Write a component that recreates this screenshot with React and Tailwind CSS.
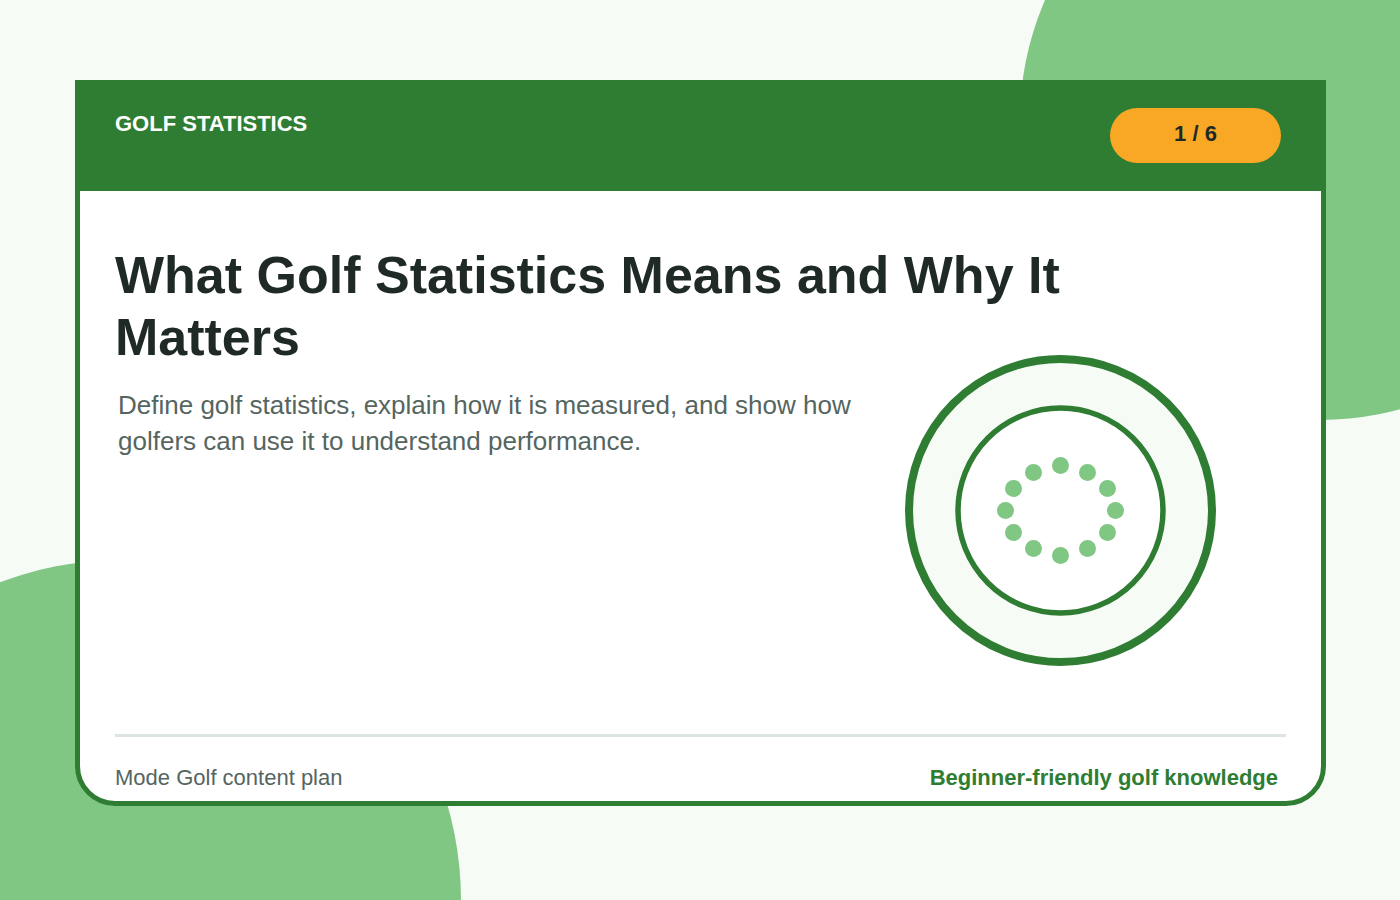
const dots = [
  [0, -45],
  [27, -38],
  [47, -22],
  [55, 0],
  [47, 22],
  [27, 38],
  [0, 45],
  [-27, 38],
  [-47, 22],
  [-55, 0],
  [-47, -22],
  [-27, -38],
];

const GolfBall = () => {
  return (
    <svg width="312" height="312" viewBox="0 0 312 312" className="shrink-0">
      <circle cx="156.5" cy="156.5" r="151.5" fill="#f6fbf6" stroke="#2e7d32" strokeWidth="8" />
      <circle cx="156.5" cy="156.5" r="102.5" fill="#ffffff" stroke="#2e7d32" strokeWidth="5.5" />
      {dots.map(([x, y], index) => (
        <circle key={index} cx={156.5 + x} cy={156.5 + y} r="8.5" fill="#81c784" />
      ))}
    </svg>
  );
};

const App = () => {
  return (
    <div className="relative h-[900px] w-[1400px] overflow-hidden bg-[#f6fbf6] font-['Liberation_Sans',Arial,sans-serif]">
      <div className="absolute left-[1020px] top-[-180px] h-[600px] w-[600px] rounded-full bg-[#81c784]" />
      <div className="absolute left-[-219px] top-[560px] h-[680px] w-[680px] rounded-full bg-[#81c784]" />

      <div className="absolute left-[75px] top-[80px] flex h-[726px] w-[1251px] flex-col overflow-hidden rounded-b-[40px] border-[5px] border-[#2e7d32] bg-white">
        <div className="flex h-[106px] shrink-0 items-start justify-between bg-[#2e7d32] pl-[35px] pr-[40px]">
          <div className="pt-[24px] text-[22px] font-bold leading-[30px] text-white">GOLF STATISTICS</div>
          <div className="mt-[23px] flex h-[55px] w-[171px] items-center justify-center rounded-full bg-[#f9a825] pb-[4px] text-[22px] font-bold text-[#1f2a27]">
            1 / 6
          </div>
        </div>

        <div className="flex flex-1 flex-col px-[35px] pt-[53px]">
          <h1 className="w-[1000px] text-[52px] font-bold leading-[62px] text-[#1f2a27]">
            What Golf Statistics Means and Why It Matters
          </h1>
          <div className="flex flex-1 items-start justify-between">
            <p className="ml-[3px] mt-[19px] w-[760px] text-[26px] leading-[36px] text-[#55655f]">
              Define golf statistics, explain how it is measured, and show how golfers can use it to understand performance.
            </p>
            <div className="mr-[70px] mt-[-14px]">
              <GolfBall />
            </div>
          </div>
          <div className="mt-[1px] h-[3px] bg-[#dde5e1]" />
          <div className="flex h-[64px] items-start justify-between pr-[8px] pt-[26px] text-[22px] leading-[30px]">
            <span className="text-[#55655f]">Mode Golf content plan</span>
            <span className="font-bold text-[#2e7d32]">Beginner-friendly golf knowledge</span>
          </div>
        </div>
      </div>
    </div>
  );
};

export default App;
